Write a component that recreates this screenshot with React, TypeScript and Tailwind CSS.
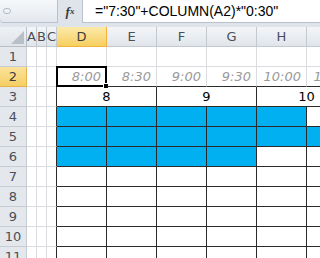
const cols = [
  { key: "A", w: 10 },
  { key: "B", w: 10 },
  { key: "C", w: 10 },
  { key: "D", w: 50 },
  { key: "E", w: 50 },
  { key: "F", w: 50 },
  { key: "G", w: 50 },
  { key: "H", w: 50 },
  { key: "I", w: 50 }
];

const times: Record<string, string> = {
  D: "8:00",
  E: "8:30",
  F: "9:00",
  G: "9:30",
  H: "10:00",
  I: "10:30"
};

// last blue column index per row (D = 3)
const blueTo: Record<number, number> = { 4: 7, 5: 8, 6: 6 };

const rows = [1, 2, 3, 4, 5, 6, 7, 8, 9, 10, 11];

function FormulaBar() {
  return (
    <div className="flex h-[27px] bg-[#dfe4ea] pb-[4px]">
      <div className="flex w-[58px] items-center rounded-bl-[4px] border-r border-b border-[#b9c1cc] bg-gradient-to-b from-[#f6f8fa] to-[#e3e8ee] pl-[3px]">
        <span className="h-[6px] w-[8px] rounded-full border border-[#b3bac4] bg-[#eef1f4]" />
      </div>
      <div className="flex w-[24px] items-center justify-center font-['Liberation_Serif',serif] text-[13px] font-bold italic text-[#3a3a3a]">
        f<span className="text-[9px]">x</span>
      </div>
      <div className="flex flex-1 items-center border-b border-l border-[#b9c1cc] bg-white pl-[12px] font-['Liberation_Sans',sans-serif] text-[14px] text-black">
        ="7:30"+COLUMN(A2)*"0:30"
      </div>
    </div>
  );
}

function Sheet() {
  const cells: React.ReactNode[] = [];

  // header row
  cells.push(
    <div
      key="corner"
      className="flex items-end justify-end border-r border-b border-[#b7bec8] bg-gradient-to-b from-[#eef1f4] to-[#e0e4e9] pr-[2px] pb-[2px]"
    >
      <svg width="13" height="13" viewBox="0 0 13 13">
        <polygon points="13,0 13,13 0,13" fill="#b8bfc8" />
      </svg>
    </div>
  );
  cols.forEach((c) => {
    const sel = c.key === "D";
    cells.push(
      <div
        key={"h" + c.key}
        className={`flex items-center justify-center border-r border-b text-[13px] ${
          sel
            ? "border-[#f2b23b] bg-gradient-to-b from-[#fce9a8] to-[#f6cf5e] text-[#3d3d3d]"
            : "border-[#c3c9d1] bg-gradient-to-b from-[#f3f5f8] to-[#e1e5ea] text-[#4a4f57]"
        }`}
      >
        {c.key}
      </div>
    );
  });

  rows.forEach((r) => {
    cells.push(
      <div
        key={"r" + r}
        className={`flex items-center justify-center border-r border-b text-[13px] ${
          r === 2
            ? "border-[#e6b34a] bg-gradient-to-b from-[#fbe39a] to-[#f5cf62] text-[#3d3d3d]"
            : "border-[#c6ccd4] bg-[#e4e8ed] text-[#4a4f57]"
        }`}
      >
        {r}
      </div>
    );

    for (let i = 0; i < cols.length; i++) {
      const c = cols[i];
      const boxed = r >= 3 && i >= 3;
      const rightBlack = r >= 3 && i >= 2;
      const bottomBlack = r >= 2 && i >= 3;
      const blue = blueTo[r] !== undefined && i >= 3 && i <= blueTo[r];

      if (r === 3 && i >= 3) {
        // merged pairs D:E, F:G, H:I
        const label = i === 3 ? "8" : i === 5 ? "9" : "10";
        cells.push(
          <div
            key={"c" + r + c.key}
            className="col-span-2 flex items-center justify-center border-r border-b border-[#2b2b2b] bg-white pt-[1px] text-[13px] text-black"
          >
            {label}
          </div>
        );
        i++;
        continue;
      }

      cells.push(
        <div
          key={"c" + r + c.key}
          className={`relative flex items-center justify-end pr-[5px] border-r border-b ${
            rightBlack ? "border-r-[#2b2b2b]" : "border-r-[#dadcdf]"
          } ${bottomBlack ? "border-b-[#2b2b2b]" : "border-b-[#dadcdf]"} ${
            blue ? "bg-[#00b0f0]" : boxed ? "bg-white" : ""
          }`}
        >
          {r === 2 && times[c.key] && (
            <span className="whitespace-nowrap text-[13px] italic text-[#9a9a9a]">
              {times[c.key]}
            </span>
          )}
          {r === 2 && c.key === "D" && (
            <>
              <div className="absolute -top-[1px] -left-[1px] h-[21px] w-[51px] border-2 border-black" />
              <div className="absolute -right-[3px] -bottom-[3px] h-[6px] w-[6px] border border-white bg-black" />
            </>
          )}
        </div>
      );
    }
  });

  return (
    <div
      className="grid bg-white"
      style={{
        gridTemplateColumns: "27px 10px 10px 10px 50px 50px 50px 50px 50px 50px",
        gridTemplateRows: "20px repeat(11, 20px)"
      }}
    >
      {cells}
    </div>
  );
}

export default function App() {
  return (
    <div className="h-[258px] w-[320px] overflow-hidden bg-white font-['DejaVu_Sans',sans-serif]">
      <FormulaBar />
      <Sheet />
    </div>
  );
}
